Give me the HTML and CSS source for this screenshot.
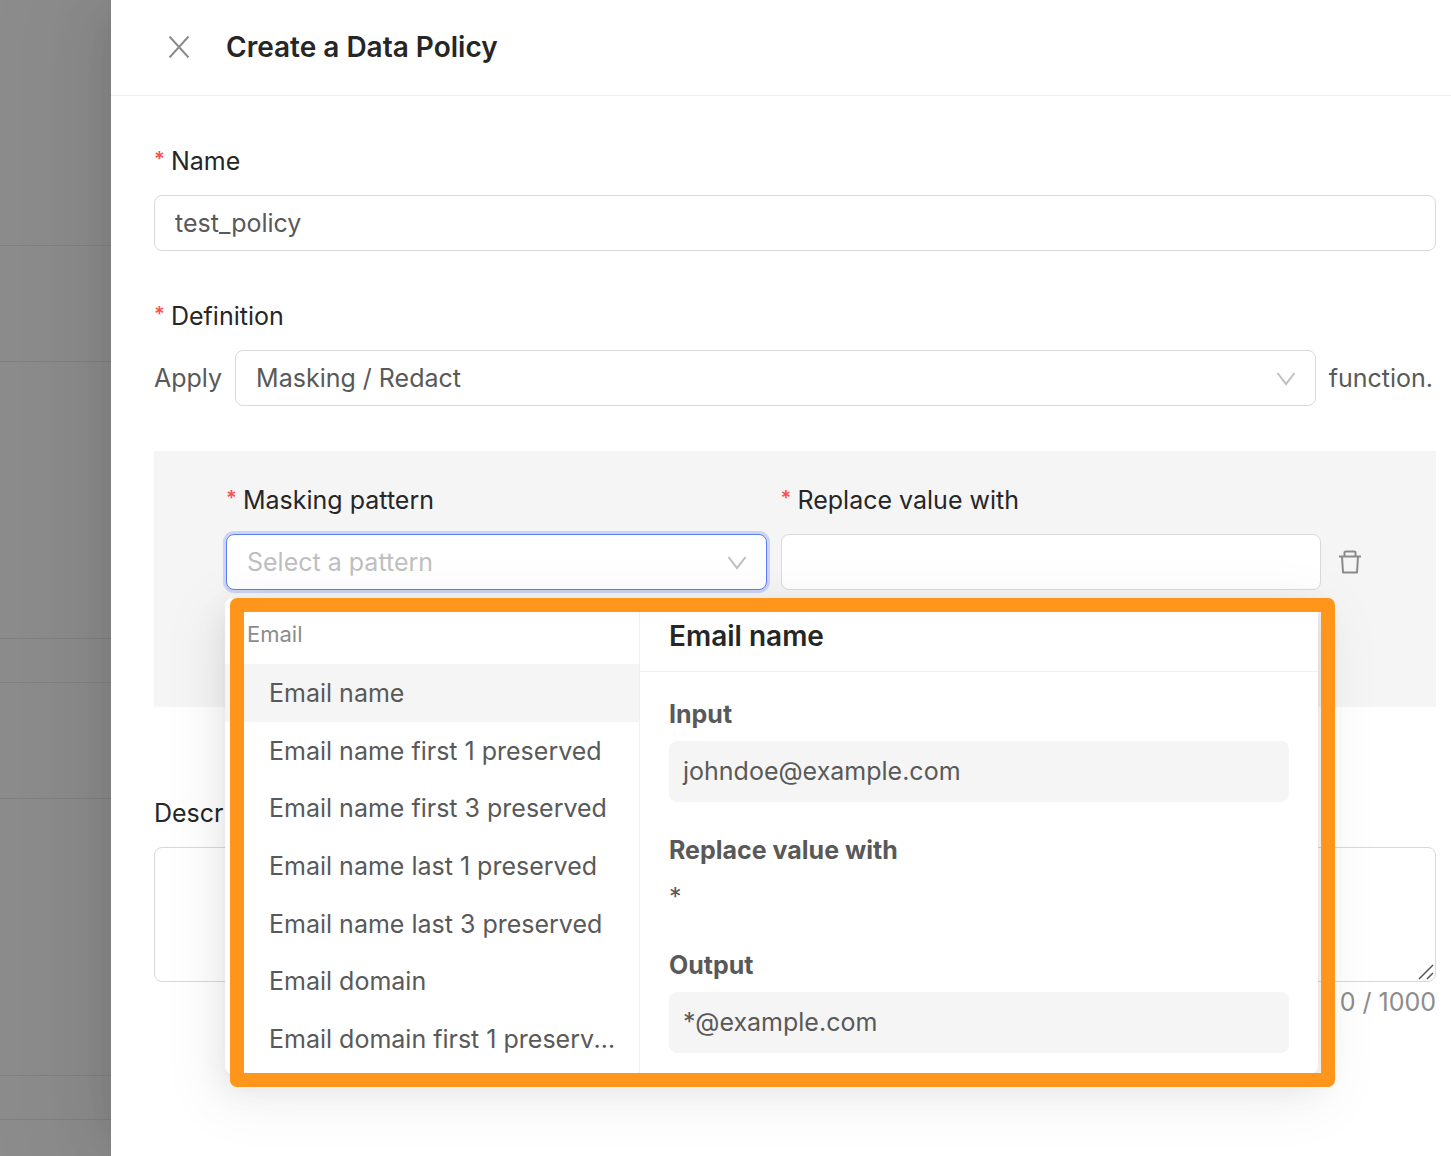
FILE: index.html
```html
<!DOCTYPE html>
<html lang="en">
<head>
<meta charset="utf-8">
<meta name="viewport" content="width=device-width, initial-scale=1">
<title>Create a Data Policy</title>
<link rel="stylesheet" href="styles.css">
</head>
<body>
<div class="backdrop" aria-hidden="true">
  <div class="row row-head"></div>
  <div class="row row-mid"></div>
  <div class="row row-tall"></div>
  <div class="row row-thin"></div>
  <div class="row row-mid"></div>
  <div class="row row-tall"></div>
  <div class="row row-thin"></div>
</div>
<main class="drawer">
  <header class="drawer-header">
    <button class="icon-button" type="button" aria-label="Close">
      <svg width="22" height="22" viewBox="0 0 22 22" fill="none" stroke="#8a8a8a" stroke-width="2"><path d="M1.5 0.5 20.5 21.5M20.5 0.5 1.5 21.5"/></svg>
    </button>
    <h1 class="drawer-title">Create a Data Policy</h1>
  </header>
  <form class="form">
    <div class="field">
      <label class="label required" for="name">Name</label>
      <input class="control" id="name" type="text" value="test_policy">
    </div>
    <div class="field">
      <label class="label required" for="function">Definition</label>
      <div class="sentence">
        <span>Apply</span>
        <div class="select-wrap">
          <select class="control" id="function"><option>Masking / Redact</option></select>
          <svg class="chevron" width="20" height="14" viewBox="0 0 20 14" fill="none" stroke="#bfbfbf" stroke-width="2"><path d="M1.5 1 10 12 18.5 1"/></svg>
        </div>
        <span>function.</span>
      </div>
    </div>
    <section class="panel">
      <div class="pair">
        <div>
          <label class="label required" for="pattern">Masking pattern</label>
          <div class="select-wrap">
            <select class="control focused placeholder" id="pattern"><option>Select a pattern</option></select>
            <svg class="chevron" width="20" height="14" viewBox="0 0 20 14" fill="none" stroke="#bfbfbf" stroke-width="2"><path d="M1.5 1 10 12 18.5 1"/></svg>
          </div>
        </div>
        <div>
          <label class="label required" for="replacement">Replace value with</label>
          <input class="control" id="replacement" type="text">
        </div>
        <div class="dropdown">
          <div class="options">
            <h2 class="group">Email</h2>
            <button class="option active" type="button">Email name</button>
            <button class="option" type="button">Email name first 1 preserved</button>
            <button class="option" type="button">Email name first 3 preserved</button>
            <button class="option" type="button">Email name last 1 preserved</button>
            <button class="option" type="button">Email name last 3 preserved</button>
            <button class="option" type="button">Email domain</button>
            <button class="option" type="button">Email domain first 1 preserved</button>
          </div>
          <div class="preview">
            <h2 class="preview-title">Email name</h2>
            <dl class="sample">
              <dt>Input</dt>
              <dd class="code">johndoe@example.com</dd>
              <dt>Replace value with</dt>
              <dd>*</dd>
              <dt>Output</dt>
              <dd class="code">*@example.com</dd>
            </dl>
          </div>
        </div>
      </div>
      <button class="icon-button trash" type="button" aria-label="Delete pattern">
        <svg width="22" height="24" viewBox="0 0 22 24" fill="none" stroke="#8a8a8a" stroke-width="2" stroke-linejoin="round"><path d="M0 6.5H22M5.5 6V2.5Q5.5 1.5 6.5 1.5H15.5Q16.5 1.5 16.5 2.5V6M3 6.5 4 22.5H18L19 6.5"/></svg>
      </button>
    </section>
    <div class="field">
      <label class="label" for="description">Description</label>
      <div class="area-wrap">
        <textarea class="control area" id="description"></textarea>
        <svg class="grip" width="16" height="16" viewBox="0 0 16 16" fill="none" stroke="#555" stroke-width="1.5"><path d="M1 15 15 1M9 15 15 9"/></svg>
      </div>
      <p class="count">0 / 1000</p>
    </div>
  </form>
</main>
</body>
</html>
```
FILE: styles.css
```css
* { box-sizing: border-box; }

body {
  margin: 0;
  min-height: 100vh;
  display: flex;
  overflow-x: hidden;
  background: #fff;
  color: #595959;
  font: 400 25px/40px Inter, "Liberation Sans", sans-serif;
}

h1, h2, p, dl, dd { margin: 0; }

input, select, textarea, button { font: inherit; color: inherit; }

.backdrop {
  flex: 0 0 111px;
  background: #8c8c8c;
}

.row { border-bottom: 1px solid #808080; }
.row-head { height: 246px; }
.row-mid { height: 116px; }
.row-tall { height: 277px; }
.row-thin { height: 44px; }

.drawer {
  flex: 1;
  min-width: 0;
  background: #fff;
  box-shadow:
    -12px 0 32px -16px rgba(0, 0, 0, .08),
    -18px 0 56px 0 rgba(0, 0, 0, .05),
    -24px 0 96px 32px rgba(0, 0, 0, .03);
}

.drawer-header {
  display: flex;
  align-items: center;
  gap: 36px;
  height: 96px;
  padding: 0 57px 2px;
  border-bottom: 1px solid #f0f0f0;
}

.drawer-title, .preview-title {
  color: #262626;
  font-size: 28px;
  font-weight: 600;
}

.icon-button {
  display: flex;
  padding: 0;
  border: 0;
  background: none;
}

.form { padding: 45px 15px 44px 43px; }

.field { margin-bottom: 45px; }

.label {
  display: flex;
  gap: 8px;
  margin-bottom: 14px;
  color: #262626;
}

.required::before {
  content: "*";
  width: 9px;
  color: #ff4d4f;
  font-size: 20px;
  font-weight: 600;
  line-height: 36px;
}

.control {
  display: block;
  width: 100%;
  height: 56px;
  padding: 0 20px;
  border: 1px solid #d9d9d9;
  border-radius: 8px;
  outline: 0;
  background: #fff;
  appearance: none;
}

.focused {
  border-color: #597ef7;
  box-shadow: 0 0 0 3px #cdd5f5;
}

.placeholder { color: #bfbfbf; }

.sentence {
  display: flex;
  align-items: center;
  gap: 13px;
  padding-right: 3px;
}

.select-wrap {
  position: relative;
  flex: 1;
}

.chevron {
  position: absolute;
  right: 20px;
  top: 22px;
}

.panel {
  display: flex;
  align-items: flex-start;
  gap: 18px;
  height: 256px;
  margin-bottom: 86px;
  padding: 29px 75px 0 72px;
  background: #f5f5f5;
}

.pair {
  position: relative;
  flex: 1;
  display: grid;
  grid-template-columns: 1fr 1fr;
  gap: 14px;
}

.trash { margin-top: 70px; }

.dropdown {
  position: absolute;
  z-index: 1;
  top: 118px;
  left: -1px;
  right: 3px;
  display: flex;
  height: 476px;
  border-radius: 8px;
  background: #fff;
  box-shadow:
    0 6px 12px -8px rgba(0, 0, 0, .12),
    0 12px 32px 0 rgba(0, 0, 0, .08),
    0 18px 56px 16px rgba(0, 0, 0, .05);
}

/* highlight frame around the pattern list */
.dropdown::after {
  content: "";
  position: absolute;
  inset: 0 -17px -13px 5px;
  border: 14px solid #ff951b;
  border-radius: 7px;
  pointer-events: none;
}

.options {
  flex: 0 0 415px;
  min-width: 0;
  display: flex;
  flex-direction: column;
  padding-bottom: 6px;
  border-right: 1px solid #f0f0f0;
}

.group {
  height: 66px;
  padding: 16px 22px;
  color: #8c8c8c;
  font-size: 22px;
  font-weight: 400;
}

.option {
  flex: 1;
  padding: 0 20px 0 44px;
  border: 0;
  background: none;
  text-align: left;
  white-space: nowrap;
  overflow: hidden;
  text-overflow: ellipsis;
}

.option.active { background: #f5f5f5; }

.preview {
  flex: 1;
  min-width: 0;
}

.preview-title {
  height: 74px;
  padding: 18px 29px;
  border-bottom: 1px solid #f0f0f0;
}

.sample { padding: 22px 29px; }
.sample dt { margin-bottom: 7px; font-weight: 700; }
.sample dd { margin-bottom: 28px; }

.sample .code {
  padding: 10px 14px 11px;
  border-radius: 8px;
  background: #f5f5f5;
}

.area-wrap { position: relative; }

.area {
  height: 135px;
  padding: 8px 20px;
  resize: none;
}

.grip {
  position: absolute;
  right: 2px;
  bottom: 2px;
}

.count {
  color: #8c8c8c;
  text-align: right;
}
```
